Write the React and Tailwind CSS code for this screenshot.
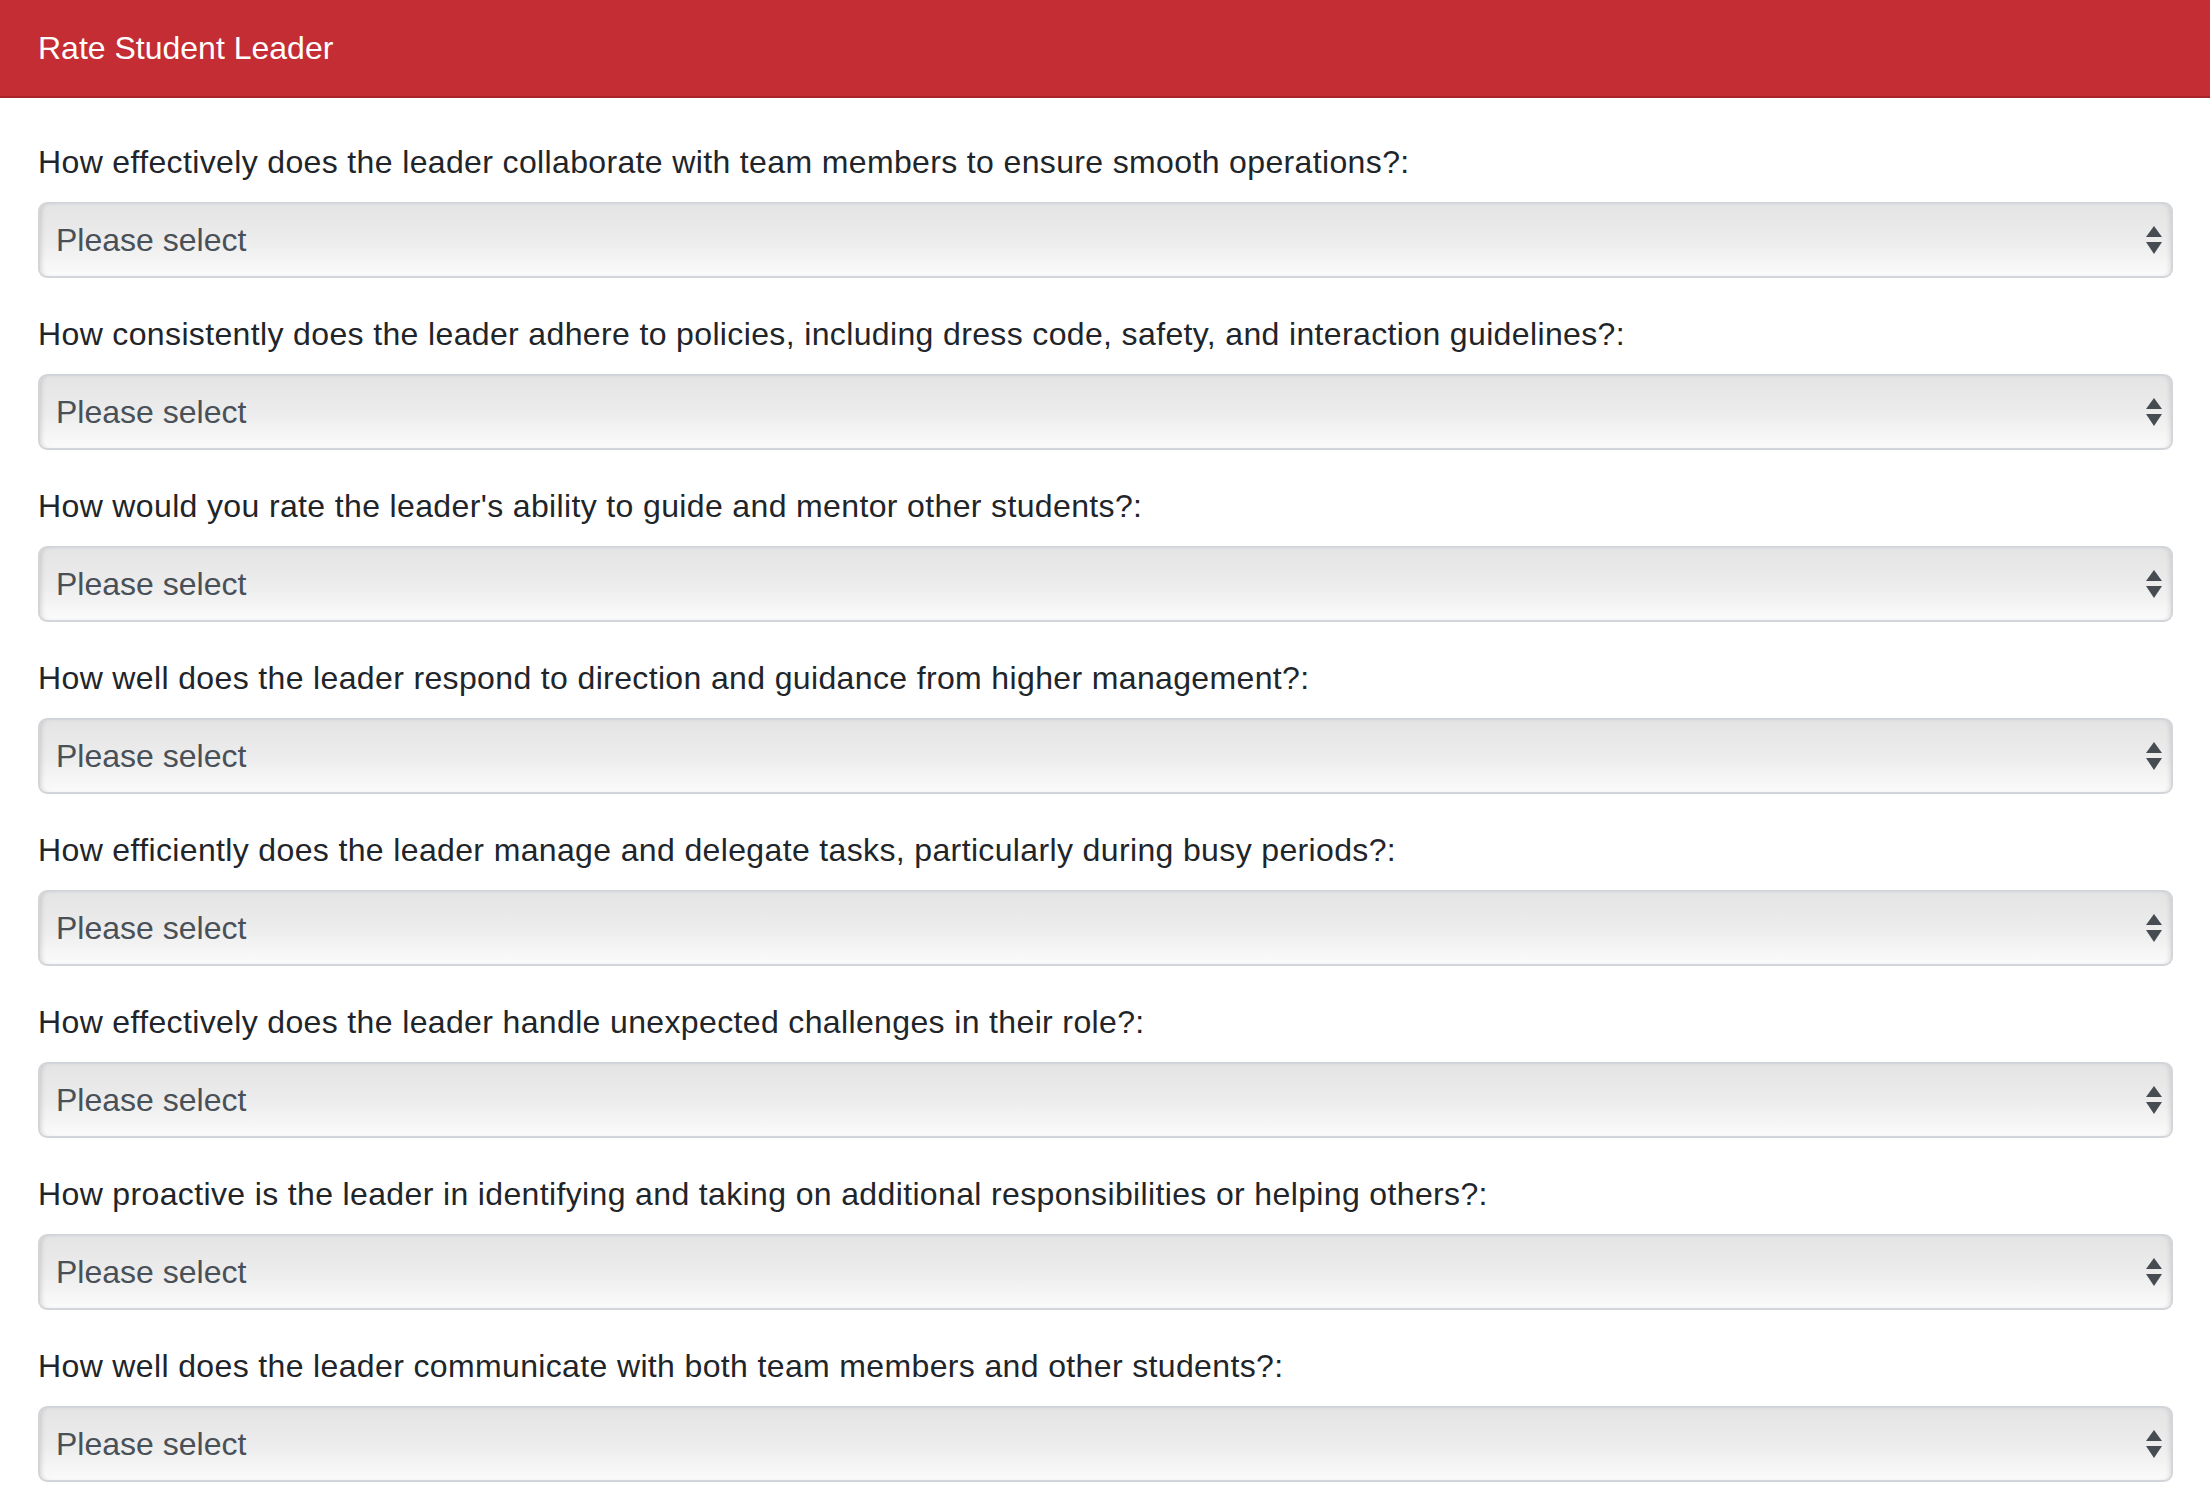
import React from 'react';

const questions = [
  'How effectively does the leader collaborate with team members to ensure smooth operations?:',
  'How consistently does the leader adhere to policies, including dress code, safety, and interaction guidelines?:',
  "How would you rate the leader's ability to guide and mentor other students?:",
  'How well does the leader respond to direction and guidance from higher management?:',
  'How efficiently does the leader manage and delegate tasks, particularly during busy periods?:',
  'How effectively does the leader handle unexpected challenges in their role?:',
  'How proactive is the leader in identifying and taking on additional responsibilities or helping others?:',
  'How well does the leader communicate with both team members and other students?:',
];

function SelectBox() {
  return (
    <div className="h-[76px] flex items-center justify-between pl-[16px] pr-[9px] rounded-[9px] border-2 border-[#d2d6da] bg-gradient-to-b from-[#e4e4e4] via-[#ececec] to-[#fbfbfb] shadow-[inset_4px_0_5px_-3px_rgba(0,0,0,0.15),inset_-4px_0_5px_-3px_rgba(0,0,0,0.12)]">
      <span className="text-[#495057]">Please select</span>
      <svg width="16" height="30" viewBox="0 0 16 30" className="mt-[2px]">
        <polygon points="8,0 16,11 0,11" fill="#474c52" />
        <polygon points="0,16 16,16 8,28" fill="#474c52" />
      </svg>
    </div>
  );
}

export default function App() {
  return (
    <div className="min-h-screen bg-white font-['Liberation_Sans',Arial,sans-serif] text-[32px]">
      <div className="h-[98px] flex items-center px-[38px] bg-[#c42d33] border-b-2 border-[#a8262b] text-white">
        Rate Student Leader
      </div>
      <div className="pl-[38px] pr-[37px] pt-[40px]">
        {questions.map((q) => (
          <div key={q} className="mb-[32px]">
            <div className="leading-[48px] mb-[16px] text-[#212529] tracking-[0.36px]">{q}</div>
            <SelectBox />
          </div>
        ))}
      </div>
    </div>
  );
}
